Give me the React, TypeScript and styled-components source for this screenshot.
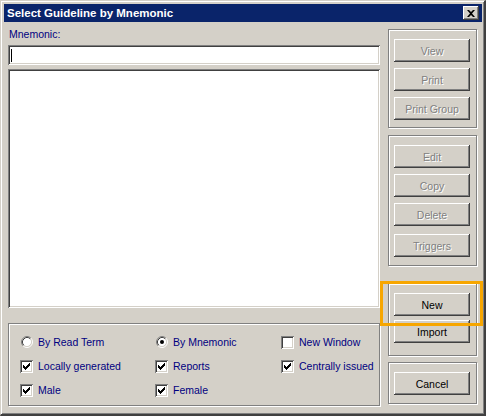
import React from "react";
import styled, { createGlobalStyle } from "styled-components";

const Global = createGlobalStyle`
  html, body { margin: 0; padding: 0; background: #D4D0C8; }
  body { font-family: "Liberation Sans", Arial, sans-serif; font-size: 10.5px; }
  * { box-sizing: border-box; }
`;

const Window = styled.div`
  width: 486px;
  height: 416px;
  background: #D4D0C8;
  border-top: 1px solid #D4D0C8;
  border-left: 1px solid #D4D0C8;
  border-right: 2px solid #404040;
  border-bottom: 2px solid #404040;
  box-shadow: inset 1px 1px #ffffff, inset -1px -1px #808080;
  padding: 3px 2px 2px 3px;
  display: flex;
  flex-direction: column;
`;

const TitleBar = styled.div`
  height: 18px;
  flex: none;
  background: #0A246A;
  display: flex;
  align-items: center;
  justify-content: space-between;
  padding: 0 3px 0 3px;
`;

const Title = styled.span`
  color: #ffffff;
  font-weight: bold;
  font-size: 11.5px;
  line-height: 18px;
  white-space: nowrap;
`;

const CloseBtn = styled.div`
  width: 16px;
  height: 14px;
  background: #D4D0C8;
  box-shadow: inset -1px -1px #404040, inset 1px 1px #ffffff, inset -2px -2px #808080;
  display: flex;
  align-items: center;
  justify-content: center;
`;

const Body = styled.div`
  flex: 1;
  display: flex;
  padding: 0 5px 0 4px;
  gap: 8px;
`;

const LeftCol = styled.div`
  width: 372px;
  display: flex;
  flex-direction: column;
  padding-top: 6px;
`;

const FieldLabel = styled.div`
  color: #000080;
  line-height: 13px;
  padding-left: 1px;
`;

const Sunken = styled.div<{ $h: number; $mt: number }>`
  background: #ffffff;
  height: ${(p) => p.$h}px;
  margin-top: ${(p) => p.$mt}px;
  box-shadow: inset 1px 1px #808080, inset -1px -1px #ffffff, inset 2px 2px #404040,
    inset -2px -2px #D4D0C8;
  padding: 4px 0 0 3px;
`;

const Caret = styled.div`
  width: 1px;
  height: 13px;
  background: #000000;
`;

const Etched = styled.div`
  border: 1px solid #808080;
  box-shadow: inset 1px 1px #ffffff, 1px 1px #ffffff;
`;

const OptionsBox = styled(Etched)`
  margin-top: 15px;
  height: 83px;
  padding: 6px 0 0 11px;
  display: grid;
  grid-template-columns: 135px 126px 1fr;
  grid-auto-rows: 24px;
`;

const Option = styled.div`
  display: flex;
  align-items: center;
  gap: 5px;
  color: #000080;
  white-space: nowrap;
`;

const Indicator = styled.div`
  width: 13px;
  height: 13px;
  flex: none;
  display: flex;
  align-items: center;
  justify-content: center;
`;

const CheckBoxFrame = styled(Indicator)`
  background: #ffffff;
  box-shadow: inset 1px 1px #808080, inset -1px -1px #ffffff, inset 2px 2px #404040,
    inset -2px -2px #D4D0C8;
`;

const RightCol = styled.div`
  width: 89px;
  display: flex;
  flex-direction: column;
  padding-top: 7px;
`;

const Group = styled(Etched)<{ $pb: number; $mt: number; $gap: number }>`
  position: relative;
  margin-top: ${(p) => p.$mt}px;
  padding: 9px 6px ${(p) => p.$pb}px 5px;
  display: flex;
  flex-direction: column;
  gap: ${(p) => p.$gap}px;
`;

const Button = styled.div<{ $disabled?: boolean; $extra?: number }>`
  height: 23px;
  width: 76px;
  margin-top: ${(p) => p.$extra || 0}px;
  background: #D4D0C8;
  box-shadow: inset -1px -1px #404040, inset 1px 1px #ffffff, inset -2px -2px #808080;
  display: flex;
  align-items: center;
  justify-content: center;
  color: ${(p) => (p.$disabled ? "#808080" : "#000000")};
  text-shadow: ${(p) => (p.$disabled ? "1px 1px 0 #ffffff" : "none")};
  white-space: nowrap;
`;

const Highlight = styled.div`
  position: absolute;
  left: -9px;
  top: -3px;
  width: 103px;
  height: 45px;
  border: 3px solid #F7A600;
  pointer-events: none;
`;

const CloseIcon = () => (
  <svg width="8" height="7" viewBox="0 0 8 7">
    <path d="M0 0h2l2 2 2-2h2L5 3.5 8 7H6L4 5 2 7H0l3-3.5z" fill="#000" />
  </svg>
);

const CheckMark = () => (
  <svg width="7" height="7" viewBox="0 0 7 7" shapeRendering="crispEdges">
    <path
      d="M6 0h1v3h-1v1h-1v1h-1v1h-1v1h-1v-1h-1v-1h-1v-3h1v1h1v1h1v-1h1v-1h1z"
      fill="#000"
    />
  </svg>
);

const RadioIcon = ({ on }: { on?: boolean }) => (
  <svg width="12" height="12" viewBox="0 0 12 12">
    <circle cx="6" cy="6" r="4.5" fill="#fff" />
    <path d="M2.11 9.89A5.5 5.5 0 0 1 9.89 2.11" stroke="#808080" fill="none" />
    <path d="M9.89 2.11A5.5 5.5 0 0 1 2.11 9.89" stroke="#ffffff" fill="none" />
    <path d="M2.82 9.18A4.5 4.5 0 0 1 9.18 2.82" stroke="#404040" fill="none" />
    <path d="M9.18 2.82A4.5 4.5 0 0 1 2.82 9.18" stroke="#D4D0C8" fill="none" />
    {on && <circle cx="6" cy="6" r="2" fill="#000" />}
  </svg>
);

const Radio = ({ label, on }: { label: string; on?: boolean }) => (
  <Option>
    <Indicator>
      <RadioIcon on={on} />
    </Indicator>
    {label}
  </Option>
);

const Check = ({ label, on }: { label: string; on?: boolean }) => (
  <Option>
    <CheckBoxFrame>{on && <CheckMark />}</CheckBoxFrame>
    {label}
  </Option>
);

export default function App() {
  return (
    <>
      <Global />
      <Window>
        <TitleBar>
          <Title>Select Guideline by Mnemonic</Title>
          <CloseBtn>
            <CloseIcon />
          </CloseBtn>
        </TitleBar>
        <Body>
          <LeftCol>
            <FieldLabel>Mnemonic:</FieldLabel>
            <Sunken $h={20} $mt={4}>
              <Caret />
            </Sunken>
            <Sunken $h={239} $mt={4} />
            <OptionsBox>
              <Radio label="By Read Term" />
              <Radio label="By Mnemonic" on />
              <Check label="New Window" />
              <Check label="Locally generated" on />
              <Check label="Reports" on />
              <Check label="Centrally issued" on />
              <Check label="Male" on />
              <Check label="Female" on />
            </OptionsBox>
          </LeftCol>
          <RightCol>
            <Group $mt={0} $pb={7} $gap={6}>
              <Button $disabled>View</Button>
              <Button $disabled>Print</Button>
              <Button $disabled>Print Group</Button>
            </Group>
            <Group $mt={7} $pb={8} $gap={6}>
              <Button $disabled>Edit</Button>
              <Button $disabled>Copy</Button>
              <Button $disabled>Delete</Button>
              <Button $disabled $extra={2}>
                Triggers
              </Button>
            </Group>
            <Group $mt={17} $pb={12} $gap={4}>
              <Button>New</Button>
              <Button>Import</Button>
              <Highlight />
            </Group>
            <Group $mt={6} $pb={8} $gap={0}>
              <Button>Cancel</Button>
            </Group>
          </RightCol>
        </Body>
      </Window>
    </>
  );
}
